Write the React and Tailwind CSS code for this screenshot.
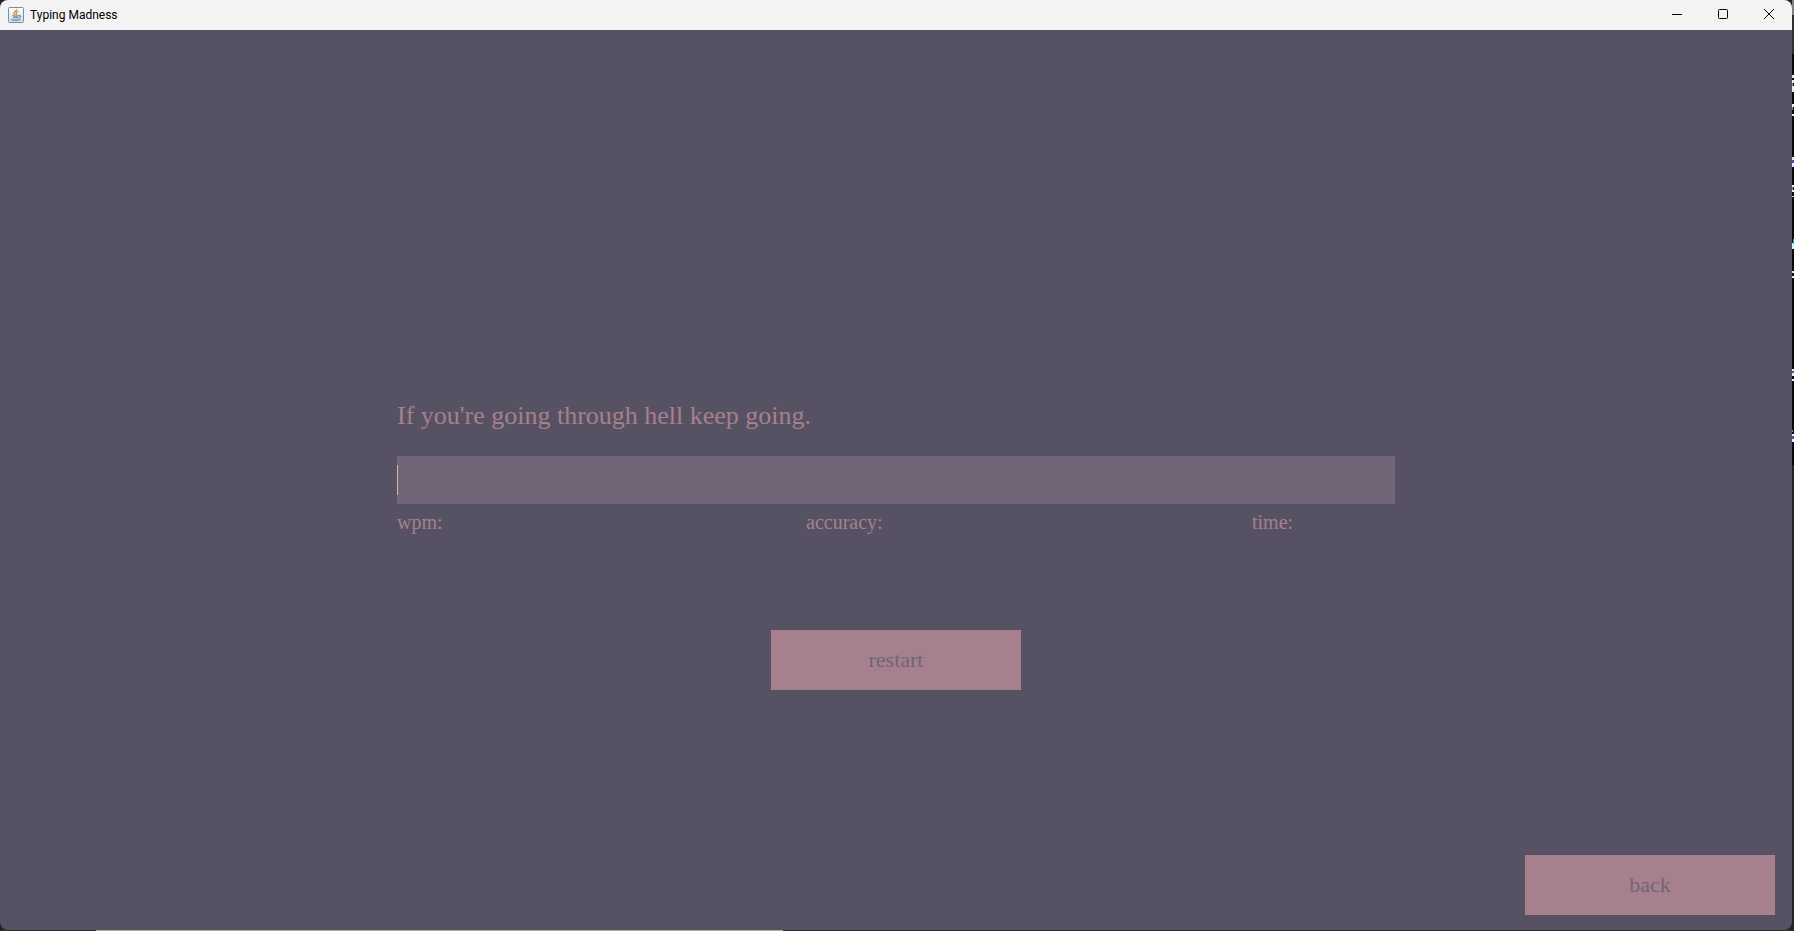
import React from "react";

function JavaIcon() {
  return (
    <svg width="16" height="16" viewBox="0 0 16 16" fill="none" aria-hidden="true">
      <defs>
        <linearGradient id="tile" x1="0" y1="0" x2="0" y2="1">
          <stop offset="0" stopColor="#ffffff" />
          <stop offset="1" stopColor="#d3dce3" />
        </linearGradient>
      </defs>
      <rect x=".5" y=".5" width="15" height="15" rx="1" fill="url(#tile)" stroke="#6f91ab" />
      <path d="M8.9 1.8C9.5 3.7 5 4.6 6 6.5c.3.6.9 1 1.2 1.6M10.3 4.2C8.4 4.9 7.5 5.6 8.3 6.6c.5.6.3 1.1-.2 1.6" stroke="#ee8322" strokeWidth="1.2" />
      <path d="M4.5 8.7c1.8.6 4.5.6 6.4 0M5.2 10.5c1.6.5 3.6.5 5.1 0M11 8.8c2.4-.7 2.4 1.5.1 2.1M3.2 12.4c2.2 1.2 7.2 1.1 9.3-.1" stroke="#44718f" strokeWidth="1" />
    </svg>
  );
}

function TitleBar() {
  const control = "flex w-[46px] items-center justify-center pb-[2px] text-black";
  return (
    <header className="flex h-[30px] shrink-0 bg-[#f3f3f3]">
      <div className="flex flex-1 items-center gap-[6px] pl-2">
        <JavaIcon />
        <h1 className="font-[Roboto,sans-serif] text-[12px] leading-4 text-black">Typing Madness</h1>
      </div>
      <button type="button" aria-label="Minimize" className={control}>
        <svg width="10" height="10" viewBox="0 0 10 10" stroke="currentColor"><path d="M0 5.5h10" /></svg>
      </button>
      <button type="button" aria-label="Maximize" className={control}>
        <svg width="10" height="10" viewBox="0 0 10 10" fill="none" stroke="currentColor"><rect x=".5" y=".5" width="9" height="9" rx="1" /></svg>
      </button>
      <button type="button" aria-label="Close" className={control}>
        <svg width="10" height="10" viewBox="0 0 10 10" stroke="currentColor"><path d="M0 0l10 10M10 0L0 10" /></svg>
      </button>
    </header>
  );
}

function ActionButton({ children }) {
  return (
    <button type="button" className="h-[60px] w-[250px] bg-[#a6808c] text-[22px] leading-6 text-[#706677]">
      {children}
    </button>
  );
}

function DesktopEdge() {
  return (
    <svg width="2" height="931" viewBox="0 0 2 931" className="shrink-0" aria-hidden="true">
      <path d="M0 0h2v15H0z" fill="#78828a" />
      <path d="M0 15h2v39H0z" fill="#303030" />
      <path d="M0 54h2v411H0z" fill="#080808" />
      <path d="M0 465h2v466H0z" fill="#222222" />
      <path d="M0 75h2v3H0zM0 80h2v3H0zM0 86h2v3H0zM0 89h2v3H0zM0 104h2v3H0zM0 114h2v2H0zM0 157h2v3H0zM0 163h2v4H0zM0 185h2v2H0zM0 190h2v2H0zM0 196h2v1H0zM0 243h2v6H0zM0 271h2v2H0zM0 276h2v2H0zM0 369h2v2H0zM0 373h2v3H0zM0 379h2v2H0zM0 434h2v2H0zM0 439h2v3H0z" fill="#e8edf2" />
      <path d="M0 83h1v3H0zM0 107h1v3H0zM0 187h1v3H0zM0 430h1v2H0z" fill="#c07a3c" />
      <path d="M0 160h2v3H0zM0 371h2v2H0zM0 436h2v3H0z" fill="#3558ad" />
      <path d="M1 239h1v5H1z" fill="#29a9d8" />
    </svg>
  );
}

export default function App() {
  return (
    <div className="flex h-screen overflow-hidden bg-[#222222]">
      <div className="flex min-w-0 flex-1 flex-col">
        <div className="flex min-h-0 flex-1 flex-col overflow-hidden rounded-lg bg-[#565264]">
          <TitleBar />
          <main className="flex flex-1 flex-col items-center pt-[370px] font-['Palatino_Linotype',Palatino,'Liberation_Serif',serif] text-[#a6808c]">
            <section className="w-full max-w-[998px]">
              <label htmlFor="typing" className="block text-[26px] leading-8">If you're going through hell keep going.</label>
              <div className="relative mt-6">
                <input
                  id="typing"
                  type="text"
                  autoComplete="off"
                  className="peer block h-12 w-full bg-[#706677] text-[26px] text-[#ccb7ae] caret-[#ccb7ae] outline-none"
                />
                <span aria-hidden="true" className="pointer-events-none absolute inset-y-[9px] left-0 w-px bg-[#ccb7ae] peer-focus:hidden" />
              </div>
              <div className="mt-1 grid grid-cols-[409fr_446fr_143fr] text-[20px] leading-[28px]">
                <span>wpm:</span>
                <span>accuracy:</span>
                <span>time:</span>
              </div>
            </section>
            <div className="mt-[94px]">
              <ActionButton>restart</ActionButton>
            </div>
            <div className="mt-auto self-end pr-[17px] pb-[15px]">
              <ActionButton>back</ActionButton>
            </div>
          </main>
        </div>
        <div className="flex h-px shrink-0 bg-[#303030] pl-24">
          <div className="w-[687px] bg-[#b5aaa5]" />
        </div>
      </div>
      <DesktopEdge />
    </div>
  );
}
